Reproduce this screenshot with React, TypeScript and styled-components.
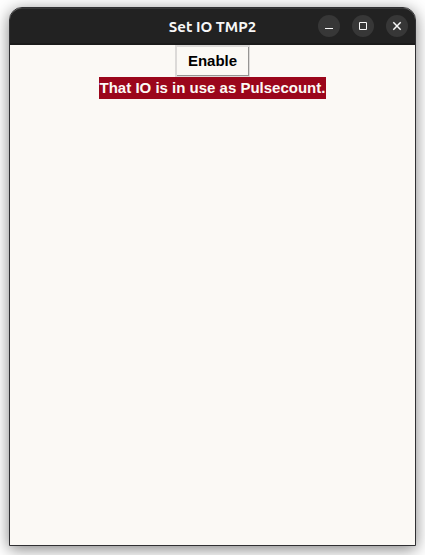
import React from "react";
import styled, { createGlobalStyle } from "styled-components";

const GlobalStyle = createGlobalStyle`
  *, *::before, *::after { box-sizing: border-box; }
  body { margin: 0; background: #ffffff; }
`;

const Desktop = styled.div`
  display: flex;
  min-height: 100vh;
  padding: 7px 9px 9px;
  overflow: hidden;
`;

const Window = styled.main`
  flex: 1;
  display: flex;
  flex-direction: column;
  border: 1px solid #303033;
  border-radius: 13px 13px 0 0;
  background: #fbf9f5;
  box-shadow: 0 3px 16px rgba(0, 0, 0, 0.5);
`;

const TitleBar = styled.header`
  display: grid;
  grid-template-columns: 1fr auto 1fr;
  align-items: center;
  height: 37px;
  padding-right: 7px;
  border-top: 1px solid #373737;
  border-bottom: 2px solid #1b1b1b;
  border-radius: 12px 12px 0 0;
  background: #222222;
`;

const Title = styled.h1`
  grid-column: 2;
  margin: 0;
  padding: 1px 0 0 7px;
  color: #f7f7f7;
  font: 700 15px/20px Ubuntu, "Noto Sans", sans-serif;
`;

const WindowControls = styled.div`
  display: flex;
  justify-content: flex-end;
  gap: 12px;
`;

const ControlButton = styled.button`
  display: flex;
  width: 22px;
  height: 22px;
  padding: 0;
  border: 0;
  border-radius: 50%;
  background: #373737;
  color: #f7f7f7;
`;

const Content = styled.section`
  flex: 1;
  display: flex;
  flex-direction: column;
  align-items: center;
  font: 700 15px/18px "Liberation Sans", Arial, sans-serif;
`;

const EnableButton = styled.button`
  height: 32px;
  padding: 0 12px 2px 11px;
  border: 2px solid #dcdad8;
  border-right: 1px solid #dcdad8;
  border-bottom: 1px solid #dcdad8;
  background: #fbf9f5;
  box-shadow: inset -1px -1px 0 #969593;
  color: #000000;
  font: inherit;
`;

const Message = styled.p`
  margin: 0;
  padding: 2px 1px;
  background: #9b061b;
  color: #fbf9f5;
`;

const ControlIcon = ({ path, weight }: { path: string; weight: number }) => (
  <svg
    width="22"
    height="22"
    viewBox="0 0 22 22"
    fill="none"
    stroke="currentColor"
    strokeWidth={weight}
    aria-hidden="true"
  >
    <path d={path} />
  </svg>
);

const controls = [
  { label: "Minimize", path: "M7 13.5H15", weight: 1 },
  { label: "Maximize", path: "M7.5 7.5H14.5V14.5H7.5Z", weight: 1 },
  { label: "Close", path: "M7.3 7.3L14.7 14.7M14.7 7.3L7.3 14.7", weight: 1.5 },
];

export default function App() {
  return (
    <>
      <GlobalStyle />
      <Desktop>
        <Window>
          <TitleBar>
            <Title>Set IO TMP2</Title>
            <WindowControls>
              {controls.map(({ label, path, weight }) => (
                <ControlButton key={label} type="button" aria-label={label}>
                  <ControlIcon path={path} weight={weight} />
                </ControlButton>
              ))}
            </WindowControls>
          </TitleBar>
          <Content>
            <EnableButton type="button">Enable</EnableButton>
            <Message role="status">That IO is in use as Pulsecount.</Message>
          </Content>
        </Window>
      </Desktop>
    </>
  );
}
